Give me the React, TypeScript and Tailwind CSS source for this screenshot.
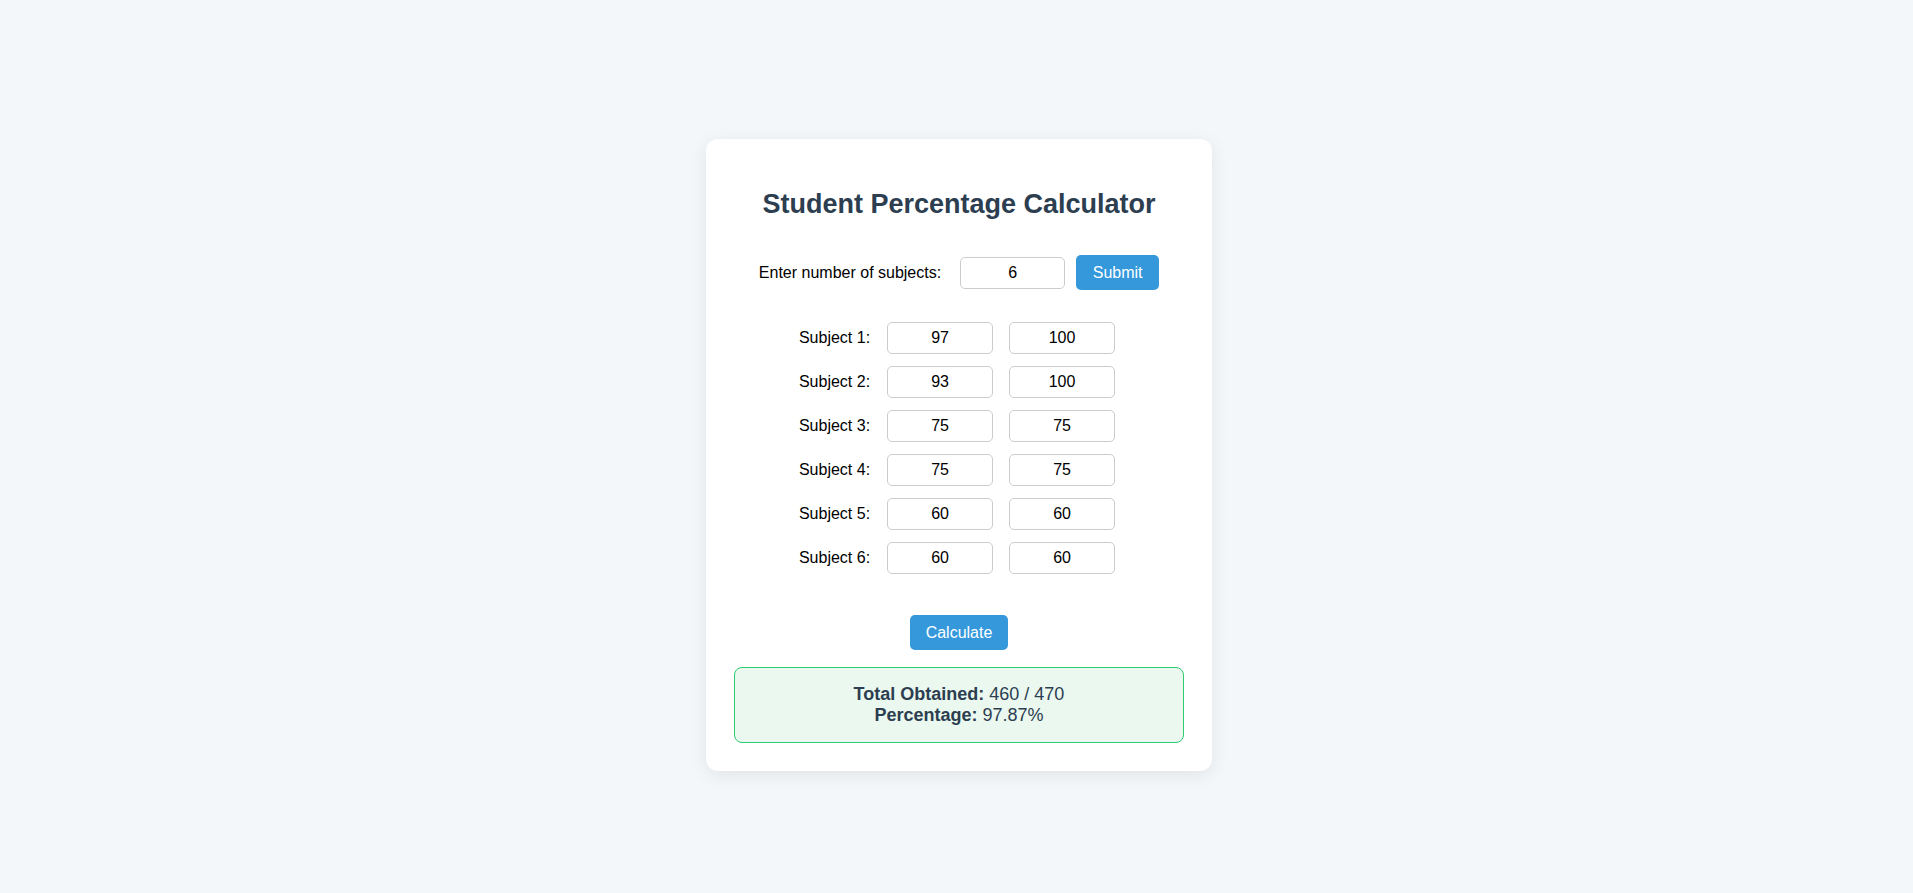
import React, { useState } from 'react'

const subjects = [
  { obtained: '97', total: '100' },
  { obtained: '93', total: '100' },
  { obtained: '75', total: '75' },
  { obtained: '75', total: '75' },
  { obtained: '60', total: '60' },
  { obtained: '60', total: '60' },
]

const inputCls =
  'h-[32px] w-[106px] rounded-[5px] border border-[#cccccc] bg-white text-center text-[16px] text-black outline-none'

export default function App() {
  const [count, setCount] = useState('6')
  const [rows, setRows] = useState(subjects)

  const obtained = rows.reduce((s, r) => s + Number(r.obtained || 0), 0)
  const total = rows.reduce((s, r) => s + Number(r.total || 0), 0)
  const pct = total ? ((obtained / total) * 100).toFixed(2) : '0.00'

  return (
    <div
      className="box-border flex min-h-screen items-center justify-center bg-[#f4f7f9] pl-[5px] pt-[17px]"
      style={{ fontFamily: '"Liberation Sans", Arial, sans-serif' }}
    >
      <div className="w-[506px] rounded-[12px] bg-white p-[28px] shadow-[0_4px_18px_rgba(0,0,0,0.08)]">
        <h2 className="mt-[21px] text-center text-[27px] font-bold leading-[32px] text-[#2c3e50]">
          Student Percentage Calculator
        </h2>

        <div className="mt-[35px] flex h-[35px] items-center justify-center">
          <label className="text-[16px] text-black">Enter number of subjects:</label>
          <input
            className="ml-[19px] h-[32px] w-[105px] rounded-[5px] border border-[#cccccc] text-center text-[16px] text-black outline-none"
            value={count}
            onChange={(e) => setCount(e.target.value)}
          />
          <button className="ml-[11px] h-[35px] w-[83px] rounded-[5px] bg-[#3498db] text-[16px] text-white">
            Submit
          </button>
        </div>

        <div className="mt-[32px] flex flex-col items-center gap-[12px] pr-[4px]">
          {rows.map((r, i) => (
            <div key={i} className="flex items-center">
              <label className="mr-[17px] text-[16px] text-black">Subject {i + 1}:</label>
              <input
                className={inputCls}
                value={r.obtained}
                onChange={(e) =>
                  setRows(rows.map((x, j) => (j === i ? { ...x, obtained: e.target.value } : x)))
                }
              />
              <input
                className={`${inputCls} ml-[16px]`}
                value={r.total}
                onChange={(e) =>
                  setRows(rows.map((x, j) => (j === i ? { ...x, total: e.target.value } : x)))
                }
              />
            </div>
          ))}
        </div>

        <div className="mt-[41px] flex justify-center">
          <button className="h-[35px] w-[98px] rounded-[5px] bg-[#3498db] text-[16px] text-white">
            Calculate
          </button>
        </div>

        <div className="mt-[17px] rounded-[8px] border border-[#2ecc71] bg-[#eaf8ef] py-[16px] text-center text-[18px] leading-[21px] text-[#2c3e50]">
          <div>
            <span className="font-bold">Total Obtained:</span> {obtained} / {total}
          </div>
          <div>
            <span className="font-bold">Percentage:</span> {pct}%
          </div>
        </div>
      </div>
    </div>
  )
}
